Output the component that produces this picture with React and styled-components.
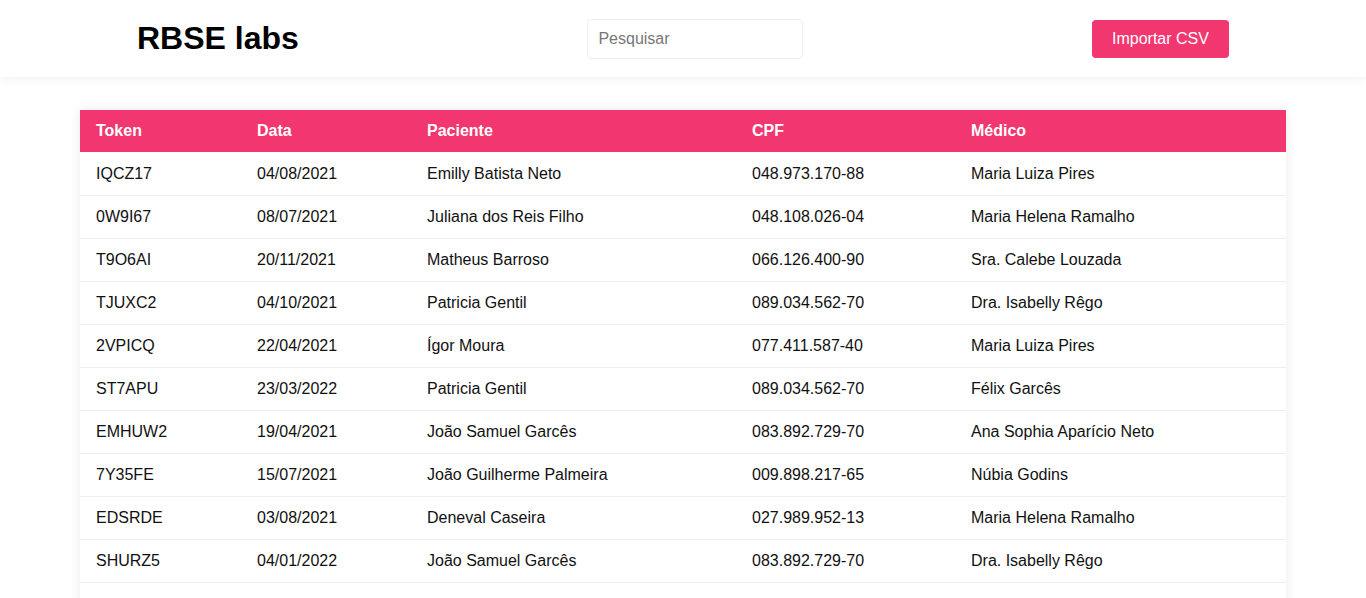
import React, { useState } from 'react';
import styled, { createGlobalStyle } from 'styled-components';

const GlobalStyle = createGlobalStyle`
    * { box-sizing: border-box; }
    body {
        margin: 0;
        background: #ffffff;
        font-family: "Liberation Sans", Arial, sans-serif;
        color: #111;
    }
`;

const Header = styled.header`
    height: 77px;
    padding: 0 137px;
    display: flex;
    align-items: center;
    justify-content: space-between;
    background: #fff;
    box-shadow: 0 2px 10px rgba(0, 0, 0, 0.06);
`;

const Title = styled.h1`
    margin: 0;
    font-size: 32px;
    font-weight: bold;
    color: #000;
`;

const Search = styled.input`
    width: 216px;
    height: 40px;
    padding: 0 10px;
    border: 1px solid #ededed;
    border-radius: 4px;
    font-family: inherit;
    font-size: 16px;
    outline: none;
    &::placeholder { color: #777; }
`;

const ImportButton = styled.button`
    width: 137px;
    height: 38px;
    border: none;
    border-radius: 4px;
    background: #f2366f;
    color: #fff;
    font-family: inherit;
    font-size: 16px;
    cursor: pointer;
    &:hover { background: #f44f81; }
`;

const Main = styled.main`
    padding: 33px 80px 0;
`;

const Table = styled.table`
    width: 100%;
    border-collapse: collapse;
    background: #fff;
    box-shadow: 0 0 12px rgba(0, 0, 0, 0.08);
    font-size: 16px;
`;

const Th = styled.th`
    width: ${({ $w }) => ($w ? `${$w}px` : 'auto')};
    height: 42px;
    padding: 0 16px;
    text-align: left;
    background: #f2366f;
    color: #fff;
    font-weight: bold;
`;

const Td = styled.td`
    height: 43px;
    padding: 1px 16px 0;
    border-bottom: 1px solid #efefef;
    color: #111;
`;

const columns = [
    { key: 'token', label: 'Token', w: 161 },
    { key: 'data', label: 'Data', w: 170 },
    { key: 'paciente', label: 'Paciente', w: 325 },
    { key: 'cpf', label: 'CPF', w: 219 },
    { key: 'medico', label: 'Médico' },
];

const exams = [
    ['IQCZ17', '04/08/2021', 'Emilly Batista Neto', '048.973.170-88', 'Maria Luiza Pires'],
    ['0W9I67', '08/07/2021', 'Juliana dos Reis Filho', '048.108.026-04', 'Maria Helena Ramalho'],
    ['T9O6AI', '20/11/2021', 'Matheus Barroso', '066.126.400-90', 'Sra. Calebe Louzada'],
    ['TJUXC2', '04/10/2021', 'Patricia Gentil', '089.034.562-70', 'Dra. Isabelly Rêgo'],
    ['2VPICQ', '22/04/2021', 'Ígor Moura', '077.411.587-40', 'Maria Luiza Pires'],
    ['ST7APU', '23/03/2022', 'Patricia Gentil', '089.034.562-70', 'Félix Garcês'],
    ['EMHUW2', '19/04/2021', 'João Samuel Garcês', '083.892.729-70', 'Ana Sophia Aparício Neto'],
    ['7Y35FE', '15/07/2021', 'João Guilherme Palmeira', '009.898.217-65', 'Núbia Godins'],
    ['EDSRDE', '03/08/2021', 'Deneval Caseira', '027.989.952-13', 'Maria Helena Ramalho'],
    ['SHURZ5', '04/01/2022', 'João Samuel Garcês', '083.892.729-70', 'Dra. Isabelly Rêgo'],
].map(([token, data, paciente, cpf, medico]) => ({ token, data, paciente, cpf, medico }));

const App = () => {
    const [query, setQuery] = useState('');

    const filtered = exams.filter((e) =>
        Object.values(e).some((v) => v.toLowerCase().includes(query.toLowerCase()))
    );

    return (
        <>
            <GlobalStyle />
            <Header>
                <Title>RBSE labs</Title>
                <Search
                    placeholder="Pesquisar"
                    value={query}
                    onChange={(e) => setQuery(e.target.value)}
                />
                <ImportButton>Importar CSV</ImportButton>
            </Header>
            <Main>
                <Table>
                    <thead>
                        <tr>
                            {columns.map((c) => (
                                <Th key={c.key} $w={c.w}>{c.label}</Th>
                            ))}
                        </tr>
                    </thead>
                    <tbody>
                        {filtered.map((row) => (
                            <tr key={row.token}>
                                {columns.map((c) => (
                                    <Td key={c.key}>{row[c.key]}</Td>
                                ))}
                            </tr>
                        ))}
                    </tbody>
                    <tfoot>
                        <tr>
                            <Td colSpan={columns.length} />
                        </tr>
                    </tfoot>
                </Table>
            </Main>
        </>
    );
};

export default App;
